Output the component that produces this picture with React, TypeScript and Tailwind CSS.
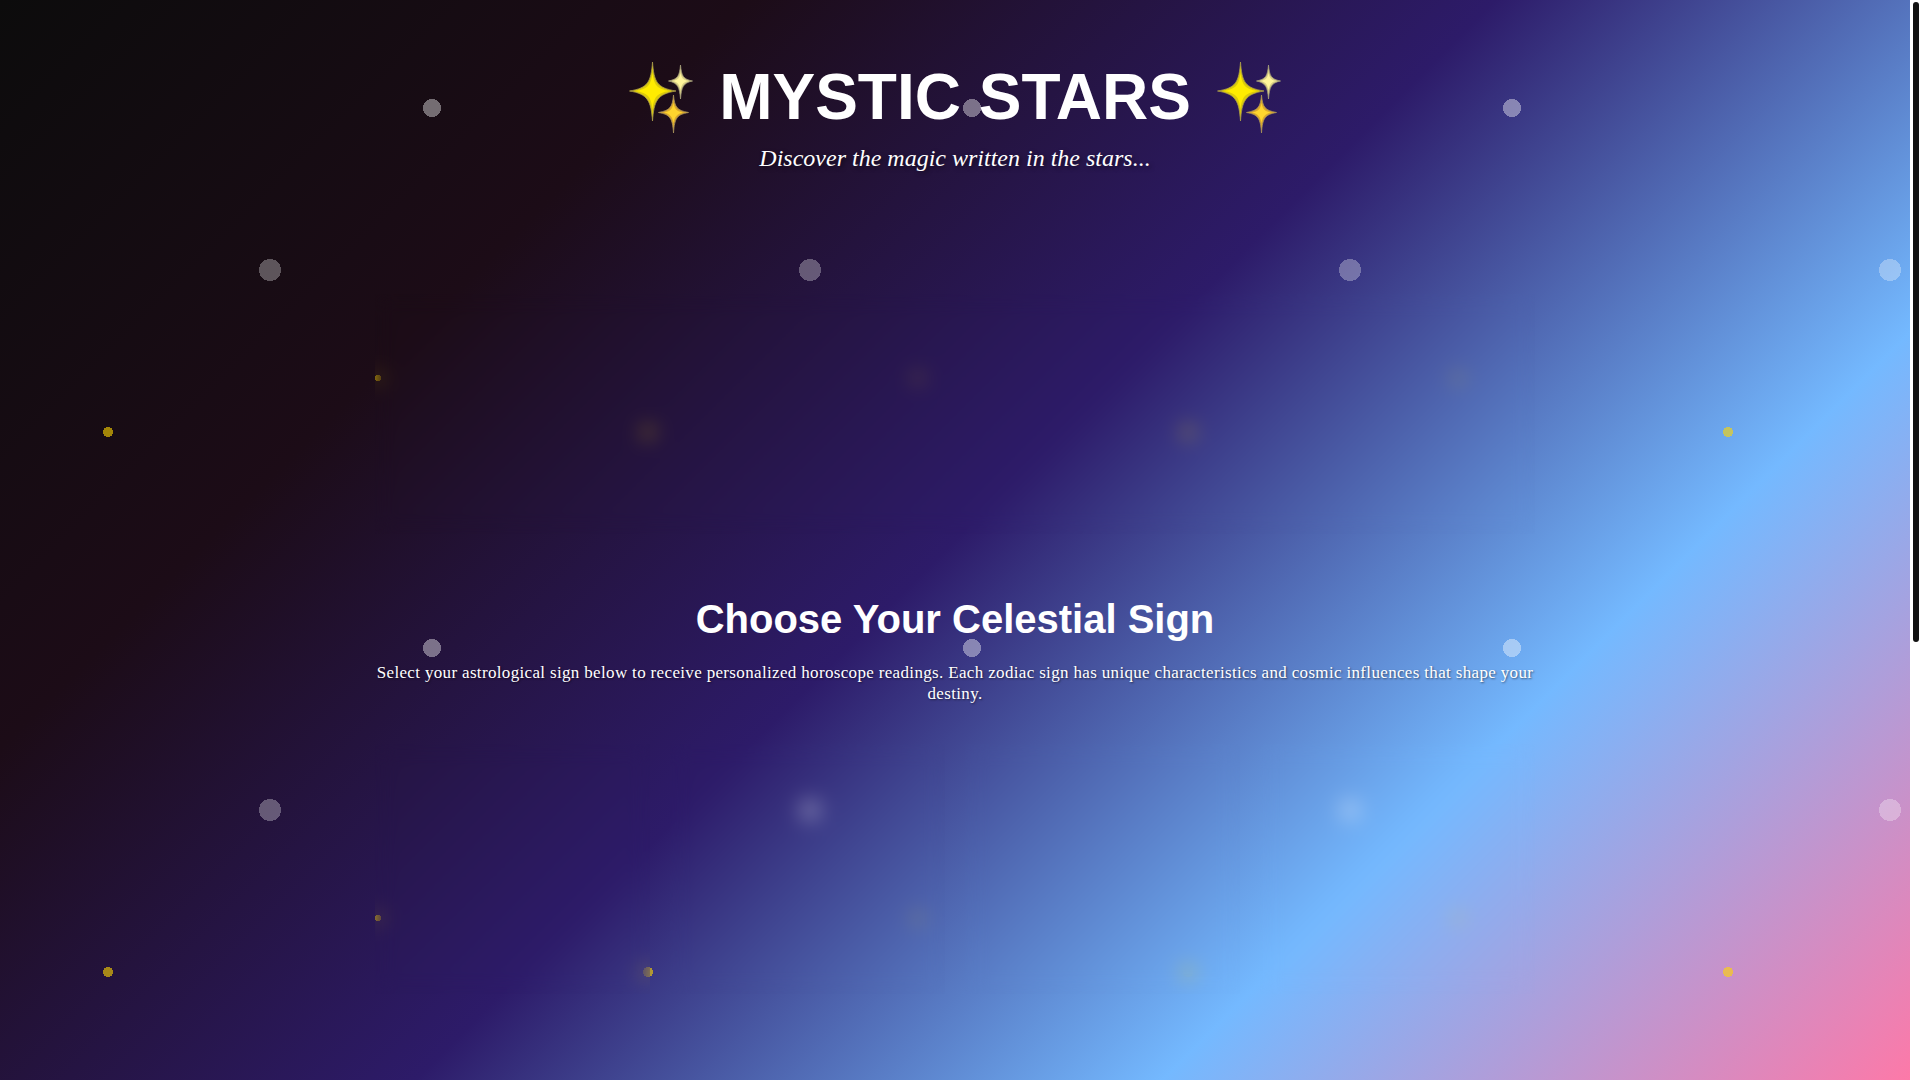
import { clsx } from 'clsx';

const signs = ['Aries', 'Taurus', 'Gemini', 'Cancer'];

// Star field: white and gold dots on a 540px tile
const starField = clsx(
    'bg-[radial-gradient(circle_at_432px_108px,rgba(255,255,255,0.4)_9px,transparent_9px),radial-gradient(circle_at_270px_270px,rgba(255,255,255,0.3)_11px,transparent_11px),radial-gradient(circle_at_108px_432px,rgba(255,215,0,0.6)_5px,transparent_5px),radial-gradient(circle_at_378px_378px,rgba(255,215,0,0.8)_3px,transparent_3px)]',
    'bg-[size:540px_540px]',
);

function Sparkles() {
    return (
        <svg className="h-[74px] w-[66px] shrink-0" viewBox="0 0 66 74" strokeLinejoin="round" aria-hidden="true">
            <path d="M24.5 2 C26 22 29 28 48 31 C29 34 26 41 24.5 61 C23 41 20 34 1.5 31 C20 28 23 22 24.5 2Z" fill="#dccb0a" stroke="#a89a4c" strokeWidth="0.8" />
            <path d="M24.5 13 C26 25 29 29 41 31 C29 33 26 37 24.5 49 C23 37 20 33 8 31 C20 29 23 25 24.5 13Z" fill="#ffec00" />
            <path d="M52.5 5 C53.5 16 55 19 64.5 21 C55 23 53.5 27 52.5 39 C51.5 27 50 23 40.5 21 C50 19 51.5 16 52.5 5Z" fill="#d9cf86" stroke="#a29c78" strokeWidth="0.8" />
            <path d="M52.5 13 C53.5 18 55 20 60 21 C55 22 53.5 25 52.5 30 C51.5 25 50 22 45 21 C50 20 51.5 18 52.5 13Z" fill="#fff59a" />
            <path d="M45.5 35 C46.5 47 49 50.5 60.5 52.5 C49 54.5 46.5 58 45.5 73 C44.5 58 42 54.5 30.5 52.5 C42 50.5 44.5 47 45.5 35Z" fill="#dba92c" stroke="#a8925c" strokeWidth="0.8" />
            <path d="M45.5 43 C46.5 49 49 51.5 55 52.5 C49 53.5 46.5 57 45.5 63 C44.5 57 42 53.5 36 52.5 C42 51.5 44.5 49 45.5 43Z" fill="#ffd52e" />
        </svg>
    );
}

export default function App() {
    return (
        <div className="relative flex h-screen overflow-hidden bg-white">
            <main className="relative min-w-0 flex-1 overflow-hidden bg-[linear-gradient(135deg,#0c0c0c_0%,#1c0c17_25%,#2d1b69_50%,#74b9ff_75%,#fd79a8_100%)] text-white">
                <div className={clsx('absolute inset-0', starField)} aria-hidden="true" />

                <div className="relative mx-auto w-full max-w-[1160px]">
                    {/* Header */}
                    <header className="pt-[60px] text-center">
                        <h1 className="flex items-center justify-center gap-[25px] font-['Liberation_Sans',sans-serif] text-[64px] leading-[74px] font-bold">
                            <Sparkles />
                            MYSTIC STARS
                            <Sparkles />
                        </h1>
                        <p className="mt-2 font-['Liberation_Serif',serif] text-2xl leading-8 italic [text-shadow:2px_2px_4px_rgba(0,0,0,0.5)]">
                            Discover the magic written in the stars...
                        </p>
                    </header>

                    <section className="mt-[120px] h-[240px] backdrop-blur-[10px]" aria-hidden="true" />

                    {/* Sign picker */}
                    <section className="mt-[62px] text-center">
                        <h2 className="font-['Liberation_Sans',sans-serif] text-[40px] leading-[46px] font-bold">
                            Choose Your Celestial Sign
                        </h2>
                        <p className="mt-5 font-['Liberation_Serif',serif] text-[17px] leading-[21px] tracking-[0.02em] [text-shadow:1px_1px_2px_rgba(0,0,0,0.5)]">
                            Select your astrological sign below to receive personalized horoscope readings. Each zodiac sign has unique characteristics and cosmic influences that shape your destiny.
                        </p>
                        <div className="mt-10 grid grid-cols-4 gap-5" aria-hidden="true">
                            {signs.map((sign) => (
                                <div key={sign} className="h-[250px] backdrop-blur-[10px]" />
                            ))}
                        </div>
                    </section>
                </div>
            </main>

            {/* Scroll track */}
            <div className="flex w-[10px] shrink-0 flex-col items-center bg-white py-0.5" aria-hidden="true">
                <div className="ml-0.5 h-[640px] w-1.5 rounded-full bg-[#111111]" />
            </div>
        </div>
    );
}
